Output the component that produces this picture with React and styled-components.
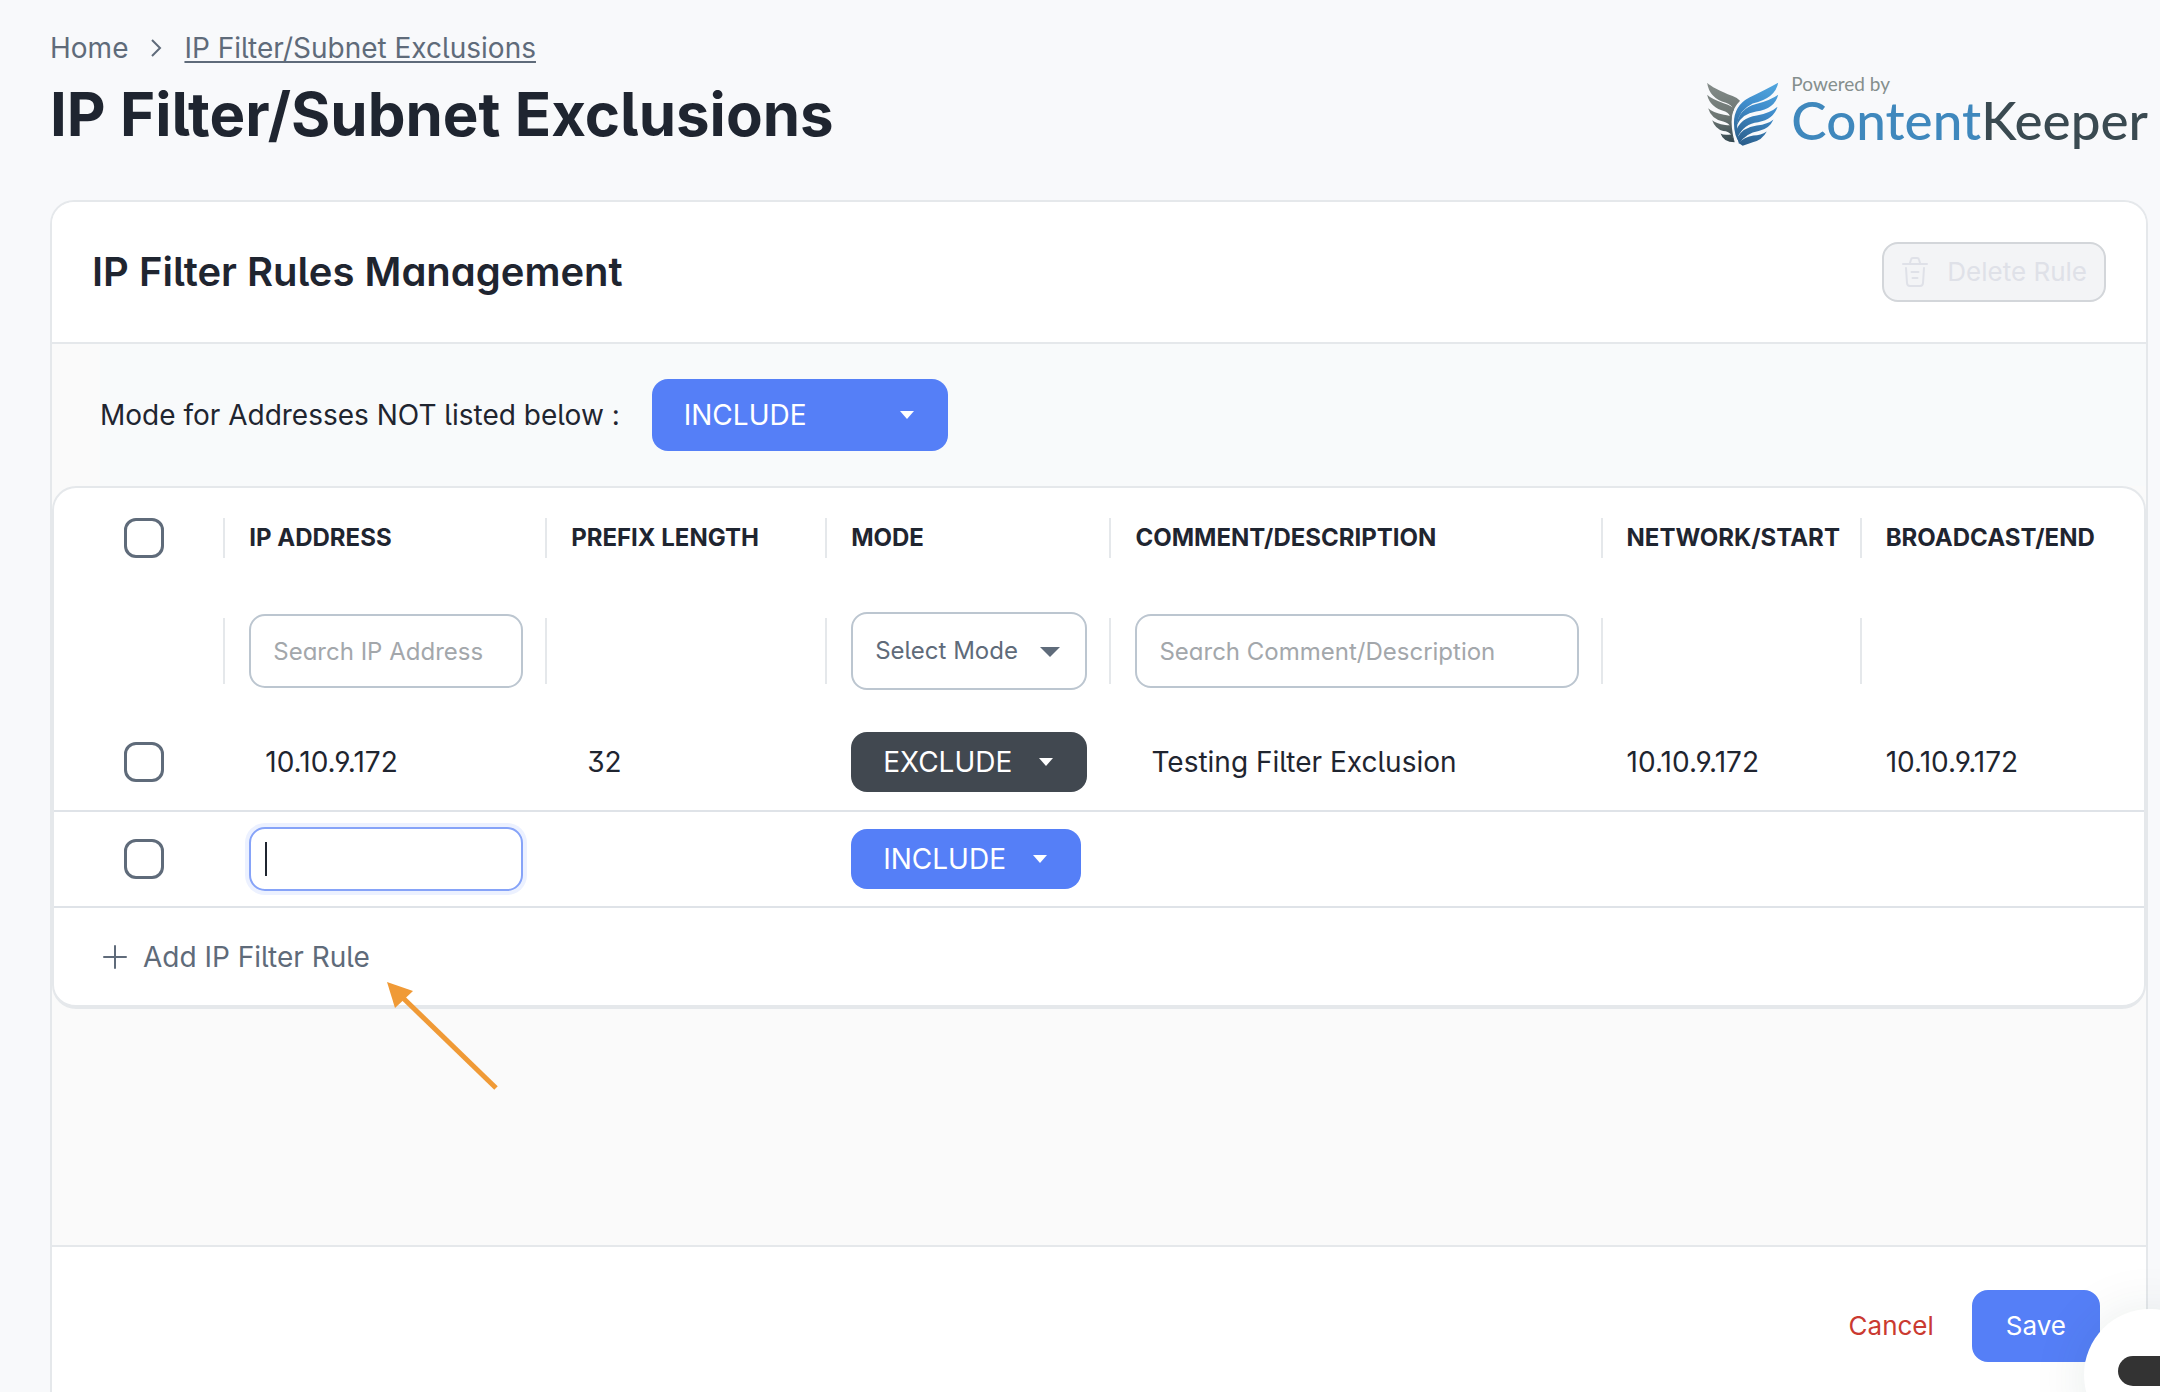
import React from "react";
import styled, { createGlobalStyle, css } from "styled-components";

const GlobalStyle = createGlobalStyle`
  * { box-sizing: border-box; }
  body {
    margin: 0;
    background: #f8f9fb;
    color: #1f2530;
    font-family: Inter, "Liberation Sans", sans-serif;
    font-size: 28px;
    line-height: 36px;
    font-feature-settings: "cv02", "cv03", "cv04", "cv05", "cv09", "cv11";
  }
  h1, h2 { margin: 0; }
`;

const SLATE = "#5f6b7a";
const LINE = "#e5e8eb";
const BLUE = "#557ff7";

const field = css`
  font-family: inherit;
  font-feature-settings: inherit;
  font-size: 24px;
  line-height: 32px;
`;

const Page = styled.main`
  display: flex;
  flex-direction: column;
  min-height: 100vh;
  padding: 28px 12px 0 50px;
`;

const PageHeader = styled.header`
  display: flex;
  justify-content: space-between;
  align-items: center;
  height: 172px;
  padding-bottom: 40px;
`;

const Heading = styled.div`
  display: flex;
  flex-direction: column;
`;

const Breadcrumb = styled.nav`
  display: flex;
  align-items: center;
  gap: 22px;
  height: 40px;
  color: ${SLATE};
`;

const Crumb = styled.a`
  color: inherit;
  text-decoration: ${(p) => (p.$current ? "underline" : "none")};
  text-decoration-thickness: 2px;
  text-underline-offset: 3px;
`;

const Title = styled.h1`
  font-size: 60px;
  line-height: 92px;
  font-weight: 700;
`;

const Brand = styled.div`
  display: flex;
  align-items: center;
  align-self: flex-end;
  gap: 12px;
  margin-bottom: 4px;
`;

const BrandText = styled.div`
  display: flex;
  flex-direction: column;
  padding-bottom: 12px;
  font-family: Lato, sans-serif;
`;

const BrandNote = styled.span`
  font-size: 19px;
  line-height: 24px;
  color: #858f8d;
`;

const BrandName = styled.span`
  font-size: 53px;
  line-height: 48px;
  font-weight: 500;
  color: #3f88bd;
  b {
    font-weight: inherit;
    color: #3a4a51;
  }
`;

const Card = styled.section`
  flex: 1;
  display: flex;
  flex-direction: column;
  border: 2px solid ${LINE};
  border-bottom: 0;
  border-radius: 24px 24px 0 0;
  background: #fafafa;
  overflow: hidden;
`;

const CardHeader = styled.div`
  display: flex;
  justify-content: space-between;
  align-items: center;
  height: 142px;
  padding: 0 40px;
  background: #fff;
  border-bottom: 2px solid ${LINE};
`;

const CardTitle = styled.h2`
  font-size: 40px;
  line-height: 48px;
  font-weight: 600;
`;

const Button = styled.button`
  display: flex;
  align-items: center;
  justify-content: center;
  gap: 18px;
  height: ${(p) => (p.$small ? 60 : 72)}px;
  padding: 0 ${(p) => p.$pad || 32}px;
  border: 2px solid ${(p) => p.$line || "transparent"};
  border-radius: 16px;
  background: ${(p) => p.$fill || "transparent"};
  color: ${(p) => p.$ink};
  font-family: inherit;
  font-size: 26px;
  line-height: 36px;
`;

const ModeBar = styled.div`
  display: flex;
  align-items: center;
  gap: 32px;
  height: 142px;
  margin-left: 48px;
  background: #f8fafb;
`;

const SelectWrap = styled.div`
  position: relative;
  width: ${(p) => p.$width}px;
  svg {
    position: absolute;
    top: 50%;
    right: ${(p) => (p.$outline ? 27 : 34)}px;
    margin-top: -4px;
    pointer-events: none;
  }
`;

const Select = styled.select`
  ${field}
  display: block;
  appearance: none;
  width: 100%;
  height: ${(p) => p.$height}px;
  padding: 0 ${(p) => (p.$outline ? 22 : 32)}px;
  border: ${(p) => (p.$outline ? "2px solid #bcc6d0" : "0")};
  border-radius: 16px;
  background: ${(p) => p.$fill};
  color: ${(p) => (p.$outline ? SLATE : "#fff")};
  font-size: ${(p) => (p.$outline ? 24 : 28)}px;
`;

const TablePanel = styled.div`
  border: 2px solid ${LINE};
  border-bottom-width: 4px;
  border-radius: 24px;
  background: #fff;
`;

const Table = styled.table`
  width: 100%;
  table-layout: fixed;
  border-collapse: collapse;
  text-align: left;
`;

const Row = styled.tr`
  height: ${(p) => p.$height}px;
  border-bottom: ${(p) => (p.$ruled ? "2px solid #dfe3e8" : "0")};
`;

const HeadCell = styled.th`
  padding: 0;
  font-size: 24px;
  line-height: 32px;
  font-weight: 700;
  white-space: nowrap;
`;

const Cell = styled.td`
  padding: 0 ${(p) => (p.$inset ? 22 : 0)}px 0 ${(p) => p.$left || 0}px;
`;

const Divided = styled.div`
  display: flex;
  align-items: center;
  height: ${(p) => p.$height}px;
  padding: 0 22px 0 24px;
  border-left: 2px solid ${LINE};
`;

const Check = styled.input`
  display: block;
  appearance: none;
  width: 40px;
  height: 40px;
  margin: 0 0 0 70px;
  border: 3px solid ${SLATE};
  border-radius: 12px;
  background: #fff;
`;

const TextField = styled.input`
  ${field}
  flex: 1;
  min-width: 0;
  width: 100%;
  height: 74px;
  padding: 0 22px;
  border: 2px solid #bcc6d0;
  border-radius: 16px;
  background: #fff;
  color: inherit;
  &::placeholder { color: #a3a7ab; opacity: 1; }
`;

const ActiveFieldWrap = styled.div`
  position: relative;
`;

const ActiveField = styled(TextField)`
  display: block;
  height: 64px;
  padding: 0 14px;
  border-color: #86a3f8;
  box-shadow: 0 0 0 4px #ecf1ff;
  outline: none;
  caret-color: transparent;
`;

const Cursor = styled.span`
  position: absolute;
  left: 16px;
  top: 15px;
  width: 2px;
  height: 34px;
  background: #1f2530;
`;

const AddBar = styled.div`
  position: relative;
  display: flex;
  align-items: center;
  height: 97px;
  padding-left: 49px;
`;

const AddButton = styled.button`
  ${field}
  display: flex;
  align-items: center;
  gap: 16px;
  padding: 0;
  border: 0;
  background: none;
  color: ${SLATE};
  font-size: 28px;
`;

const Pointer = styled.svg`
  position: absolute;
  left: 333px;
  top: 73px;
`;

const CardFooter = styled.footer`
  display: flex;
  justify-content: flex-end;
  align-items: center;
  gap: 4px;
  height: 147px;
  margin-top: auto;
  padding: 13px 46px 0 0;
  border-top: 2px solid ${LINE};
  background: #fff;
`;

const ChatBubble = styled.button`
  position: fixed;
  right: -56px;
  bottom: -49px;
  width: 132px;
  height: 132px;
  padding: 0 34px;
  border: 0;
  border-radius: 50%;
  background: #fff;
  box-shadow: 0 4px 56px rgba(20, 60, 50, 0.1);
`;

const ChatPill = styled.span`
  display: block;
  height: 30px;
  margin-bottom: 8px;
  border-radius: 15px;
  background: #333;
`;

const WingLogo = () => (
  <svg width="72" height="64" viewBox="24 24 214 191" aria-hidden="true">
    <defs>
      <linearGradient id="wingGray" gradientUnits="userSpaceOnUse" x1="60" y1="30" x2="90" y2="204">
        <stop offset="0" stopColor="#838b88" />
        <stop offset="0.55" stopColor="#6d7673" />
        <stop offset="1" stopColor="#33474f" />
      </linearGradient>
      <linearGradient id="wingBlue" gradientUnits="userSpaceOnUse" x1="200" y1="30" x2="130" y2="210">
        <stop offset="0" stopColor="#4fa3dc" />
        <stop offset="0.4" stopColor="#3f8ccb" />
        <stop offset="1" stopColor="#2b5f8c" />
      </linearGradient>
    </defs>
    <g fill="url(#wingGray)">
      <path d="M24 26Q40 42 100 66Q116 72 122 80Q108 90 102 106Q98 92 80 86Q30 72 24 26Z" />
      <path d="M24 62Q36 74 75 88Q100 95 104 106Q96 122 94 134Q92 118 78 112Q32 100 24 62Z" />
      <path d="M27 102Q40 114 74 122Q94 126 97 126Q94 142 95 160Q90 146 72 142Q36 134 27 102Z" />
      <path d="M39 138Q50 148 78 152Q92 154 95 152Q95 168 99 184Q88 170 72 170Q48 164 39 138Z" />
      <path d="M64 178Q74 184 98 180Q100 190 106 204Q72 204 64 178Z" />
      <path d="M108 86Q88 110 92 150Q94 184 106 204Q94 160 98 126Q102 100 122 80Z" />
    </g>
    <g fill="url(#wingBlue)">
      <path d="M236 26Q200 46 150 70Q104 94 104 146Q104 184 122 208Q112 170 114 146Q120 108 160 88Q228 72 236 26Z" />
      <path d="M236 62Q214 78 170 90Q118 104 112 154Q128 118 170 112Q226 104 236 62Z" />
      <path d="M234 98Q214 116 172 124Q122 132 110 172L114 190Q134 148 176 144Q222 136 234 98Z" />
      <path d="M222 136Q206 150 172 154Q130 160 114 190L119 208Q140 176 178 170Q210 164 222 136Z" />
      <path d="M202 172Q184 184 162 184Q136 188 118 206L130 214Q150 208 160 204Q188 198 202 172Z" />
    </g>
  </svg>
);

const TrashIcon = () => (
  <svg width="28" height="32" viewBox="0 0 28 32" fill="none" stroke="currentColor" strokeWidth="2" strokeLinecap="round" strokeLinejoin="round" aria-hidden="true">
    <path d="M2 8H26M9 7L10 3.500Q10.300 2 12 2H16Q17.700 2 18 3.500L19 7M5 12L6 27Q6.200 30 9 30H19Q21.800 30 22 27L23 12M10.500 16H17.500M11.500 22H16.500" />
  </svg>
);

const Triangle = ({ large }) => (
  <svg width={large ? 20 : 14} height={large ? 10 : 8} viewBox="0 0 14 8" preserveAspectRatio="none" fill={large ? SLATE : "#fff"} aria-hidden="true">
    <path d="M0 0H14L7 8Z" />
  </svg>
);

const ModeSelect = ({ value, width, height, fill, label, id }) => (
  <SelectWrap $width={width}>
    <Select id={id} aria-label={label} $height={height} $fill={fill} defaultValue={value}>
      <option>INCLUDE</option>
      <option>EXCLUDE</option>
    </Select>
    <Triangle />
  </SelectWrap>
);

const columns = ["IP ADDRESS", "PREFIX LENGTH", "MODE", "COMMENT/DESCRIPTION", "NETWORK/START", "BROADCAST/END"];
const widths = ["8.1%", "15.4%", "13.4%", "13.6%", "23.5%", "12.4%", "13.6%"];

export default function App() {
  return (
    <>
      <GlobalStyle />
      <Page>
        <PageHeader>
          <Heading>
            <Breadcrumb aria-label="Breadcrumb">
              <Crumb href="#home">Home</Crumb>
              <svg width="12" height="18" viewBox="0 0 12 18" fill="none" stroke={SLATE} strokeWidth="2" aria-hidden="true">
                <path d="M2 1L10 9L2 17" />
              </svg>
              <Crumb href="#exclusions" $current>IP Filter/Subnet Exclusions</Crumb>
            </Breadcrumb>
            <Title>IP Filter/Subnet Exclusions</Title>
          </Heading>
          <Brand>
            <WingLogo />
            <BrandText>
              <BrandNote>Powered by</BrandNote>
              <BrandName>Content<b>Keeper</b></BrandName>
            </BrandText>
          </Brand>
        </PageHeader>

        <Card>
          <CardHeader>
            <CardTitle>IP Filter Rules Management</CardTitle>
            <Button type="button" disabled $small $pad={17} $line="#d3d6da" $fill="#f3f4f6" $ink="#dfe1e8">
              <TrashIcon />
              Delete Rule
            </Button>
          </CardHeader>

          <ModeBar>
            <label htmlFor="default-mode">Mode for Addresses NOT listed below :</label>
            <ModeSelect id="default-mode" value="INCLUDE" width={296} height={72} fill={BLUE} />
          </ModeBar>

          <TablePanel>
            <Table>
              <colgroup>
                {widths.map((w, i) => <col key={i} width={w} />)}
              </colgroup>
              <thead>
                <Row $height={100}>
                  <HeadCell><Check type="checkbox" aria-label="Select all rules" /></HeadCell>
                  {columns.map((c) => (
                    <HeadCell key={c} scope="col"><Divided $height={40}>{c}</Divided></HeadCell>
                  ))}
                </Row>
                <Row $height={126}>
                  <Cell />
                  <Cell>
                    <Divided $height={66}><TextField aria-label="Search IP Address" placeholder="Search IP Address" /></Divided>
                  </Cell>
                  <Cell><Divided $height={66} /></Cell>
                  <Cell>
                    <Divided $height={66}>
                      <SelectWrap $width={236} $outline>
                        <Select aria-label="Select Mode" $outline $height={78} $fill="#fff">
                          <option>Select Mode</option>
                        </Select>
                        <Triangle large />
                      </SelectWrap>
                    </Divided>
                  </Cell>
                  <Cell>
                    <Divided $height={66}><TextField aria-label="Search Comment/Description" placeholder="Search Comment/Description" /></Divided>
                  </Cell>
                  <Cell><Divided $height={66} /></Cell>
                  <Cell><Divided $height={66} /></Cell>
                </Row>
              </thead>
              <tbody>
                <Row $height={97} $ruled>
                  <Cell><Check type="checkbox" aria-label="Select rule 10.10.9.172" /></Cell>
                  <Cell $left={42}>10.10.9.172</Cell>
                  <Cell $left={42}>32</Cell>
                  <Cell $left={26}><ModeSelect label="Mode" value="EXCLUDE" width={236} height={60} fill="#414850" /></Cell>
                  <Cell $left={42}>Testing Filter Exclusion</Cell>
                  <Cell $left={26}>10.10.9.172</Cell>
                  <Cell $left={26}>10.10.9.172</Cell>
                </Row>
                <Row $height={96} $ruled>
                  <Cell><Check type="checkbox" aria-label="Select new rule" /></Cell>
                  <Cell $left={26} $inset>
                    <ActiveFieldWrap>
                      <ActiveField aria-label="IP Address" />
                      <Cursor />
                    </ActiveFieldWrap>
                  </Cell>
                  <Cell />
                  <Cell $left={26}><ModeSelect label="Mode" value="INCLUDE" width={230} height={60} fill={BLUE} /></Cell>
                  <Cell />
                  <Cell />
                  <Cell />
                </Row>
              </tbody>
            </Table>
            <AddBar>
              <AddButton type="button">
                <svg width="24" height="24" viewBox="0 0 24 24" fill="none" stroke="currentColor" strokeWidth="2" strokeLinecap="round" aria-hidden="true">
                  <path d="M1 12H23M12 1V23" />
                </svg>
                Add IP Filter Rule
              </AddButton>
              <Pointer width="114" height="110" viewBox="0 0 114 110" aria-hidden="true">
                <path d="M14 15L109 107" stroke="#f09a36" strokeWidth="5" />
                <path d="M0 1L26 10L8 27Z" fill="#f09a36" />
              </Pointer>
            </AddBar>
          </TablePanel>

          <CardFooter>
            <Button type="button" $ink="#ca3a31">Cancel</Button>
            <Button type="button" $fill={BLUE} $ink="#fff" $line={BLUE}>Save</Button>
          </CardFooter>
        </Card>
      </Page>
      <ChatBubble type="button" aria-label="Open chat"><ChatPill /></ChatBubble>
    </>
  );
}
